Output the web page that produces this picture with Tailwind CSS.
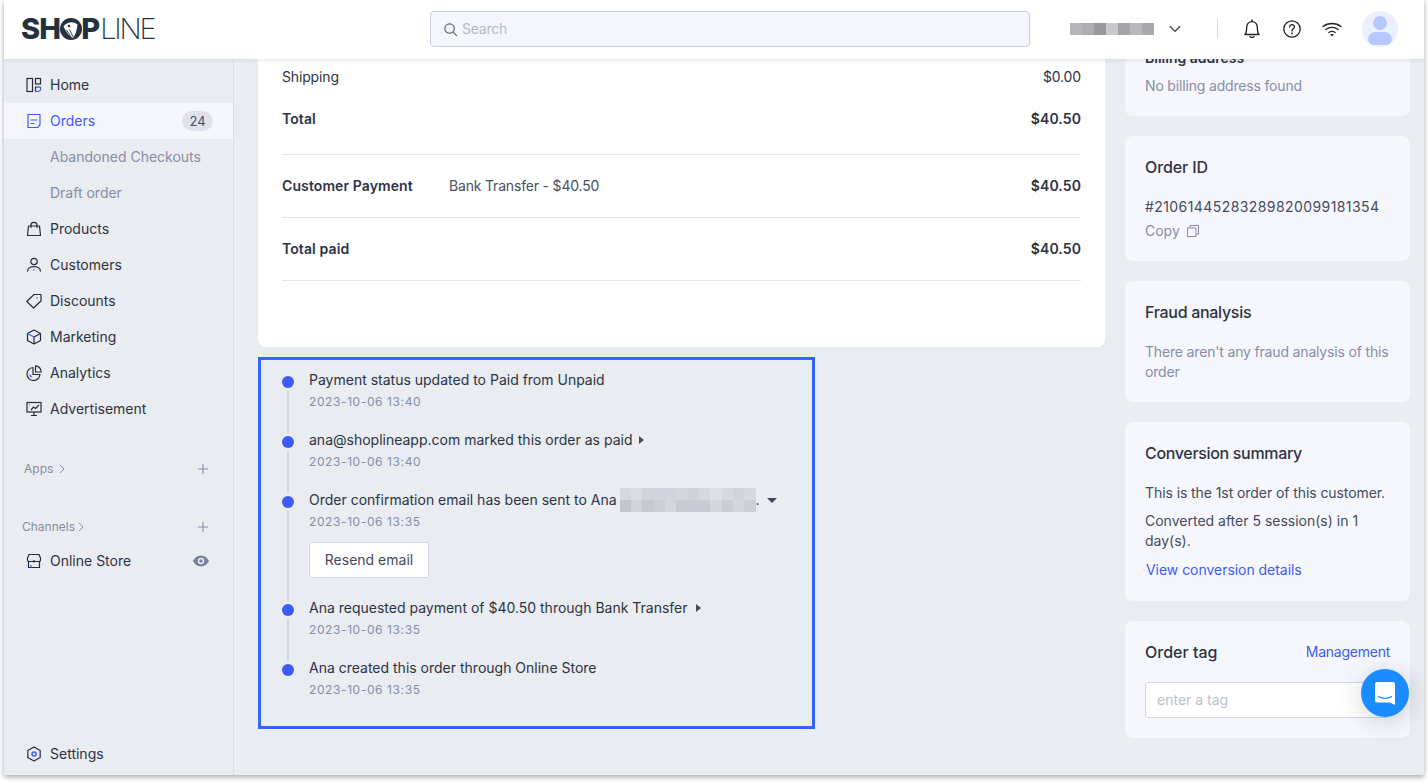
<!DOCTYPE html>
<html lang="en">

<head>
    <meta charset="UTF-8">
    <meta name="viewport" content="width=device-width, initial-scale=1.0">
    <title>Order detail | SHOPLINE</title>
    <script src="https://cdn.jsdelivr.net/npm/@tailwindcss/browser@4"></script>
</head>

<body class="bg-white font-['Inter',sans-serif] text-[14px] leading-[22px] text-[#2e3344] h-[783px] overflow-hidden">
    <div class="relative ml-[4px] w-[1420px] h-[775px] bg-[#e9ecf1] shadow-[0_2px_5px_rgba(0,0,0,0.35)] flex flex-col overflow-hidden">

        <!-- Header -->
        <header class="relative z-10 h-[59px] shrink-0 bg-white shadow-[0_1px_4px_rgba(40,50,80,0.12)] flex items-center pl-[18px] pb-px">
            <div class="w-[408px] flex items-center h-[30px] font-['Inter',sans-serif] text-[#233240] text-[29px] leading-[30px]">
                <span class="font-extrabold tracking-[-0.8px] -ml-px">SH</span>
                <svg class="w-[22px] h-[22px] mx-[-0.5px]" viewBox="0 0 22 22">
                    <circle cx="11" cy="11" r="11" fill="#233240" />
                    <path d="M3.5 8.5 C6 4.5 13 2.5 17.5 6.5 C17 12 15.5 16.5 13 20 C10.5 19.5 6 14 3.5 8.5 Z" fill="#fff" />
                    <circle cx="9" cy="8" r="1.3" fill="#233240" />
                    <path d="M6.5 12 L11 19 M9.5 11.5 L13 19" stroke="#233240" stroke-width="0.9" />
                </svg>
                <span class="font-extrabold">P</span>
                <span class="font-extralight tracking-[-2.2px]">LINE</span>
            </div>
            <div class="w-[600px] h-[36px] rounded-[4px] border border-[#c8cede] bg-[#f4f6fb] flex items-center pl-[12px] gap-[4px] text-[#b4b9ca]">
                <svg class="w-[15px] h-[15px] text-[#5d6375]" viewBox="0 0 16 16" fill="none" stroke="currentColor" stroke-width="1.3">
                    <circle cx="7" cy="7" r="5" />
                    <path d="M10.8 10.8 L14.5 14.5" stroke-linecap="round" />
                </svg>
                <span class="tracking-[-0.25px]">Search</span>
            </div>
            <div class="ml-[40px] w-[85px] h-[12px] flex">
                <div class="w-[12px] bg-[#b5b5ba]"></div>
                <div class="w-[12px] bg-[#adadb2]"></div>
                <div class="w-[12px] bg-[#98989d]"></div>
                <div class="w-[12px] bg-[#c9c9cc]"></div>
                <div class="w-[12px] bg-[#a3a3a8]"></div>
                <div class="w-[12px] bg-[#b9b9bd]"></div>
                <div class="w-[12px] bg-[#aaaaae]"></div>
            </div>
            <svg class="ml-[14px] w-[12px] h-[8px] text-[#3a3f4e]" viewBox="0 0 12 8" fill="none" stroke="currentColor" stroke-width="1.3">
                <path d="M1 1.2 L6 6.4 L11 1.2" />
            </svg>
            <div class="ml-[36px] w-px h-[20px] bg-[#d5d8e0]"></div>
            <svg class="ml-[25px] w-[18px] h-[20px] text-[#1f2430]" viewBox="0 0 18 20" fill="none" stroke="currentColor" stroke-width="1.4">
                <path d="M2 15.5 C3.5 14 3.6 12.5 3.6 9 C3.6 5 6 2.6 9 2.6 C12 2.6 14.4 5 14.4 9 C14.4 12.5 14.5 14 16 15.5 Z" stroke-linejoin="round" />
                <path d="M9 1 V2.6 M7 17.5 C7.5 18.8 10.5 18.8 11 17.5" stroke-linecap="round" />
            </svg>
            <svg class="ml-[22px] w-[18px] h-[18px] text-[#1f2430]" viewBox="0 0 18 18" fill="none" stroke="currentColor" stroke-width="1.3">
                <circle cx="9" cy="9" r="8.2" />
                <path d="M6.6 7 C6.6 3.9 11.4 3.9 11.4 7 C11.4 8.9 9 8.8 9 11" stroke-linecap="round" />
                <circle cx="9" cy="13.4" r="0.9" fill="currentColor" stroke="none" />
            </svg>
            <svg class="ml-[21px] w-[20px] h-[15px] text-[#1f2430]" viewBox="0 0 20 15" fill="none" stroke="currentColor" stroke-width="1.3">
                <path d="M1 4.5 C6 0.5 14 0.5 19 4.5 M3.8 7.6 C7.5 4.8 12.5 4.8 16.2 7.6 M6.8 10.5 C8.8 9.2 11.2 9.2 13.2 10.5" stroke-linecap="round" />
                <path d="M8 12 H12 L10 14.5 Z" fill="currentColor" stroke="none" />
            </svg>
            <div class="ml-[20px] w-[36px] h-[36px] rounded-full bg-[#ebefff] overflow-hidden flex flex-col items-center">
                <div class="mt-[5px] w-[14px] h-[14px] rounded-full bg-[#b6c8ff]"></div>
                <div class="mt-[2px] w-[24px] h-[13px] rounded-t-[10px] rounded-b-[8px] bg-[#b6c8ff]"></div>
            </div>
        </header>

        <div class="flex flex-1 min-h-0">

            <!-- Sidebar -->
            <aside class="w-[230px] shrink-0 border-r border-[#d9dde6] flex flex-col pt-[8px] pb-[3px]">
                <a class="h-[36px] flex items-center pl-[22px]">
                    <svg class="w-[16px] h-[16px] mr-[8px] text-[#262b38]" viewBox="0 0 16 16" fill="none" stroke="currentColor" stroke-width="1.2">
                        <rect x="1" y="1.5" width="5.5" height="13" />
                        <rect x="9.5" y="1.5" width="5" height="5.5" />
                        <path d="M14.5 10 V13 L12.5 14.5 H9.5" stroke="#3d5afe" />
                        <path d="M9.5 14.5 V10 H14.5" />
                    </svg>
                    <span>Home</span>
                </a>
                <a class="h-[36px] flex items-center pl-[22px] pr-[20px] bg-[#f5f6fb] text-[#3d5afe]">
                    <svg class="w-[16px] h-[16px] mr-[8px]" viewBox="0 0 16 16" fill="none" stroke="currentColor" stroke-width="1.2">
                        <path d="M2 1.5 H14 V12 L11.5 14.5 H2 Z" stroke-linejoin="round" />
                        <path d="M5 7 H11 M5 10.5 H8" stroke-linecap="round" />
                    </svg>
                    <span>Orders</span>
                    <span class="ml-auto w-[31px] h-[20px] rounded-full bg-[#dfe2ed] text-[#4a4f60] text-[13px] leading-[20px] text-center">24</span>
                </a>
                <a class="h-[36px] flex items-center pl-[46px] text-[#878da6]">Abandoned Checkouts</a>
                <a class="h-[36px] flex items-center pl-[46px] text-[#878da6]">Draft order</a>
                <a class="h-[36px] flex items-center pl-[22px]">
                    <svg class="w-[16px] h-[16px] mr-[8px] text-[#262b38]" viewBox="0 0 16 16" fill="none" stroke="currentColor" stroke-width="1.2">
                        <path d="M2.5 5 H13.5 L14.5 14.5 H1.5 Z" stroke-linejoin="round" />
                        <path d="M5 7 V4 C5 0.6 11 0.6 11 4 V7" />
                    </svg>
                    <span>Products</span>
                </a>
                <a class="h-[36px] flex items-center pl-[22px]">
                    <svg class="w-[16px] h-[16px] mr-[8px] text-[#262b38]" viewBox="0 0 16 16" fill="none" stroke="currentColor" stroke-width="1.2">
                        <circle cx="8" cy="4.5" r="3.2" />
                        <path d="M1.5 14.5 C1.5 8 14.5 8 14.5 14.5" />
                        <path d="M8 12 V13.5" stroke="#3d5afe" />
                    </svg>
                    <span>Customers</span>
                </a>
                <a class="h-[36px] flex items-center pl-[22px]">
                    <svg class="w-[16px] h-[16px] mr-[8px] text-[#262b38]" viewBox="0 0 16 16" fill="none" stroke="currentColor" stroke-width="1.2">
                        <path d="M0.8 8.5 L8 1.5 H15 V8 L7.5 15 Z" stroke-linejoin="round" />
                        <circle cx="11" cy="5" r="0.8" fill="#3d5afe" stroke="none" />
                    </svg>
                    <span>Discounts</span>
                </a>
                <a class="h-[36px] flex items-center pl-[22px]">
                    <svg class="w-[16px] h-[16px] mr-[8px] text-[#262b38]" viewBox="0 0 16 16" fill="none" stroke="currentColor" stroke-width="1.2">
                        <path d="M8 1 L14.5 4.5 V11.5 L8 15 L1.5 11.5 V4.5 Z" stroke-linejoin="round" />
                        <path d="M8 8 L14.5 4.5 M8 8 V15" />
                        <path d="M8 8 L1.5 4.5" stroke="#3d5afe" />
                    </svg>
                    <span>Marketing</span>
                </a>
                <a class="h-[36px] flex items-center pl-[22px]">
                    <svg class="w-[16px] h-[16px] mr-[8px] text-[#262b38]" viewBox="0 0 16 16" fill="none" stroke="currentColor" stroke-width="1.2">
                        <path d="M7 2.5 A6.5 6.5 0 1 0 14 9.5 H7 Z" stroke-linejoin="round" />
                        <path d="M9.5 0.8 A6 6 0 0 1 15.2 7 H9.5 Z" stroke-linejoin="round" />
                        <path d="M3.6 9.5 A3.5 3.5 0 0 0 6 12" stroke="#3d5afe" />
                    </svg>
                    <span>Analytics</span>
                </a>
                <a class="h-[36px] flex items-center pl-[22px]">
                    <svg class="w-[16px] h-[16px] mr-[8px] text-[#262b38]" viewBox="0 0 16 16" fill="none" stroke="currentColor" stroke-width="1.2">
                        <rect x="1" y="1.5" width="14" height="9.5" />
                        <path d="M8 11 V14.5 M5 14.5 H11 M5 9 L7.5 6 L9.5 7.5 L13 4" />
                        <path d="M3 4 H4" stroke="#3d5afe" />
                    </svg>
                    <span>Advertisement</span>
                </a>
                <div class="mt-[33px] h-[18px] flex items-center pl-[20px] pr-[25px] text-[12px] text-[#878da6]">
                    <span>Apps</span>
                    <svg class="ml-[6px] w-[6px] h-[10px]" viewBox="0 0 6 10" fill="none" stroke="currentColor" stroke-width="1">
                        <path d="M1 0.8 L5 5 L1 9.2" />
                    </svg>
                    <svg class="ml-auto w-[10px] h-[10px]" viewBox="0 0 10 10" stroke="currentColor" stroke-width="1.1">
                        <path d="M5 0 V10 M0 5 H10" />
                    </svg>
                </div>
                <div class="mt-[40px] h-[18px] flex items-center pl-[18px] pr-[25px] text-[12px] text-[#878da6]">
                    <span>Channels</span>
                    <svg class="ml-[3px] w-[6px] h-[10px]" viewBox="0 0 6 10" fill="none" stroke="currentColor" stroke-width="1">
                        <path d="M1 0.8 L5 5 L1 9.2" />
                    </svg>
                    <svg class="ml-auto w-[10px] h-[10px]" viewBox="0 0 10 10" stroke="currentColor" stroke-width="1.1">
                        <path d="M5 0 V10 M0 5 H10" />
                    </svg>
                </div>
                <a class="mt-[7px] h-[36px] flex items-center pl-[22px] pr-[24px]">
                    <svg class="w-[16px] h-[16px] mr-[8px] text-[#262b38]" viewBox="0 0 16 16" fill="none" stroke="currentColor" stroke-width="1.2">
                        <path d="M3 1.5 H13 L14.5 5 V7 C14.5 8 13.5 8.5 13.5 8.5 V14.5 H2.5 V8.5 C2.5 8.5 1.5 8 1.5 7 V5 Z" stroke-linejoin="round" />
                        <path d="M2 8.5 H14 M8 7 V9.5" />
                        <path d="M5 12 V14.5" stroke="#3d5afe" />
                    </svg>
                    <span>Online Store</span>
                    <svg class="ml-auto w-[16px] h-[12px] text-[#7a819b]" viewBox="0 0 16 12">
                        <path fill-rule="evenodd" d="M8 0.5 C12 0.5 14.8 3.6 16 6 C14.8 8.4 12 11.5 8 11.5 C4 11.5 1.2 8.4 0 6 C1.2 3.6 4 0.5 8 0.5 Z M8 2.8 A3.2 3.2 0 1 0 8 9.2 A3.2 3.2 0 1 0 8 2.8 Z" fill="currentColor" />
                        <circle cx="8" cy="6" r="1.7" fill="currentColor" />
                    </svg>
                </a>
                <a class="mt-auto h-[36px] flex items-center pl-[22px]">
                    <svg class="w-[16px] h-[16px] mr-[8px] text-[#262b38]" viewBox="0 0 16 16" fill="none" stroke="currentColor" stroke-width="1.2">
                        <path d="M8 1 L14.2 4.5 V11.5 L8 15 L1.8 11.5 V4.5 Z" stroke-linejoin="round" />
                        <circle cx="8" cy="8" r="2" stroke="#3d5afe" stroke-width="1.5" />
                    </svg>
                    <span>Settings</span>
                </a>
            </aside>

            <!-- Main -->
            <main class="flex-1 min-w-0 overflow-hidden flex items-start pl-[24px]">
                <div class="w-[847px] shrink-0">
                    <section class="bg-white rounded-b-[8px] px-[24px] pt-[7px] h-[288px]">
                        <div class="flex justify-between tracking-[-0.15px]">
                            <span>Shipping</span>
                            <span>$0.00</span>
                        </div>
                        <div class="mt-[20px] flex justify-between font-semibold tracking-[0.1px]">
                            <span>Total</span>
                            <span>$40.50</span>
                        </div>
                        <div class="mt-[24px] h-px bg-[#e3e5ec]"></div>
                        <div class="mt-[20px] flex items-center font-semibold tracking-[0.1px]">
                            <span class="w-[167px]">Customer Payment</span>
                            <span class="font-normal tracking-[-0.18px] text-[#4a4f60]">Bank Transfer - $40.50</span>
                            <span class="ml-auto">$40.50</span>
                        </div>
                        <div class="mt-[20px] h-px bg-[#e3e5ec]"></div>
                        <div class="mt-[20px] flex justify-between font-semibold tracking-[0.1px]">
                            <span>Total paid</span>
                            <span>$40.50</span>
                        </div>
                        <div class="mt-[20px] h-px bg-[#e3e5ec]"></div>
                    </section>

                    <!-- Timeline -->
                    <section class="mt-[10px] w-[557px] h-[372px] border-[3px] border-[#3366ff] pt-[9px] pl-[21px]">
                        <div class="flex gap-[15px]">
                            <div class="w-[12px] flex flex-col items-center">
                                <div class="mt-[7px] w-[12px] h-[12px] rounded-full bg-[#3d5afe]"></div>
                                <div class="mt-[3px] -mb-[4px] flex-1 w-[2px] bg-[#d3d7e8]"></div>
                            </div>
                            <div class="pb-[16px]">
                                <p>Payment status updated to Paid from Unpaid</p>
                                <p class="text-[12px] text-[#878da6] tracking-[0.6px]">2023-10-06 13:40</p>
                            </div>
                        </div>
                        <div class="flex gap-[15px]">
                            <div class="w-[12px] flex flex-col items-center">
                                <div class="mt-[7px] w-[12px] h-[12px] rounded-full bg-[#3d5afe]"></div>
                                <div class="mt-[3px] -mb-[4px] flex-1 w-[2px] bg-[#d3d7e8]"></div>
                            </div>
                            <div class="pb-[16px]">
                                <p class="flex items-center">ana@shoplineapp.com marked this order as paid
                                    <span class="ml-[7px] w-0 h-0 border-y-[4px] border-y-transparent border-l-[5px] border-l-[#454a5c]"></span>
                                </p>
                                <p class="text-[12px] text-[#878da6] tracking-[0.6px]">2023-10-06 13:40</p>
                            </div>
                        </div>
                        <div class="flex gap-[15px]">
                            <div class="w-[12px] flex flex-col items-center">
                                <div class="mt-[7px] w-[12px] h-[12px] rounded-full bg-[#3d5afe]"></div>
                                <div class="mt-[3px] -mb-[4px] flex-1 w-[2px] bg-[#d3d7e8]"></div>
                            </div>
                            <div class="pb-[19px]">
                                <p class="flex items-center">Order confirmation email has been sent to Ana
                                    <span class="ml-[3px] -my-px w-[136px] h-[24px] grid grid-cols-[repeat(12,1fr)] opacity-90">
                                        <i class="bg-[#d2d5dd]"></i><i class="bg-[#d8dbe2]"></i><i class="bg-[#cfd2da]"></i><i class="bg-[#cfd2da]"></i><i class="bg-[#cfd3db]"></i><i class="bg-[#d2d5dd]"></i><i class="bg-[#cdd0d8]"></i><i class="bg-[#d3d6de]"></i><i class="bg-[#dcdfe5]"></i><i class="bg-[#d5d8e0]"></i><i class="bg-[#cfd2da]"></i><i class="bg-[#d4d7df]"></i>
                                        <i class="bg-[#bfc2ca]"></i><i class="bg-[#cfd2d9]"></i><i class="bg-[#c3c6ce]"></i><i class="bg-[#c8cbd2]"></i><i class="bg-[#d0d3da]"></i><i class="bg-[#c5c8d0]"></i><i class="bg-[#c5c8d0]"></i><i class="bg-[#c4c7cf]"></i><i class="bg-[#d2d5dc]"></i><i class="bg-[#c7cad2]"></i><i class="bg-[#d2d5dc]"></i><i class="bg-[#c9ccd4]"></i>
                                    </span>
                                    <span>.</span>
                                    <span class="ml-[7px] w-0 h-0 border-x-[5px] border-x-transparent border-t-[5px] border-t-[#454a5c]"></span>
                                </p>
                                <p class="text-[12px] text-[#878da6] tracking-[0.6px]">2023-10-06 13:35</p>
                                <button class="mt-[9px] block w-[120px] h-[36px] rounded-[3px] border border-[#d5d8e6] bg-white text-[#454a5c]">Resend email</button>
                            </div>
                        </div>
                        <div class="flex gap-[15px]">
                            <div class="w-[12px] flex flex-col items-center">
                                <div class="mt-[7px] w-[12px] h-[12px] rounded-full bg-[#3d5afe]"></div>
                                <div class="mt-[3px] -mb-[4px] flex-1 w-[2px] bg-[#d3d7e8]"></div>
                            </div>
                            <div class="pb-[16px]">
                                <p class="flex items-center">Ana requested payment of $40.50 through Bank Transfer
                                    <span class="ml-[8px] w-0 h-0 border-y-[4px] border-y-transparent border-l-[5px] border-l-[#454a5c]"></span>
                                </p>
                                <p class="text-[12px] text-[#878da6] tracking-[0.6px]">2023-10-06 13:35</p>
                            </div>
                        </div>
                        <div class="flex gap-[15px]">
                            <div class="w-[12px] flex flex-col items-center">
                                <div class="mt-[7px] w-[12px] h-[12px] rounded-full bg-[#3d5afe]"></div>
                            </div>
                            <div>
                                <p>Ana created this order through Online Store</p>
                                <p class="text-[12px] text-[#878da6] tracking-[0.6px]">2023-10-06 13:35</p>
                            </div>
                        </div>
                    </section>
                </div>

                <!-- Right column -->
                <div class="ml-[20px] w-[285px] shrink-0 flex flex-col gap-[20px]">
                    <section class="-mt-[20px] h-[77px] rounded-[8px] bg-[#f6f7fc] px-[20px] pt-[8px]">
                        <p class="font-semibold">Billing address</p>
                        <p class="mt-[6px] tracking-[-0.17px] text-[#878da6]">No billing address found</p>
                    </section>
                    <section class="h-[125px] rounded-[8px] bg-[#f6f7fc] px-[20px] pt-[19px]">
                        <h3 class="text-[16px] leading-[24px] font-medium tracking-[-0.1px]">Order ID</h3>
                        <p class="mt-[17px] tracking-[0.42px] text-[#454a5c]">#21061445283289820099181354</p>
                        <p class="mt-[2px] flex items-center text-[#878da6]">Copy
                            <svg class="ml-[7px] w-[12px] h-[12px]" viewBox="0 0 12 12" fill="none" stroke="currentColor" stroke-width="1">
                                <rect x="0.5" y="3" width="8.5" height="8.5" />
                                <path d="M3 3 V0.5 H11.5 V9 H9" />
                            </svg>
                        </p>
                    </section>
                    <section class="h-[121px] rounded-[8px] bg-[#f6f7fc] px-[20px] pt-[19px]">
                        <h3 class="text-[16px] leading-[24px] font-medium tracking-[-0.3px]">Fraud analysis</h3>
                        <p class="mt-[18px] leading-[20px] tracking-[-0.17px] text-[#878da6]">There aren't any fraud analysis of this order</p>
                    </section>
                    <section class="h-[179px] rounded-[8px] bg-[#f6f7fc] px-[20px] pt-[19px]">
                        <h3 class="text-[16px] leading-[24px] font-medium tracking-[-0.33px]">Conversion summary</h3>
                        <p class="mt-[18px] leading-[20px] tracking-[-0.08px] text-[#454a5c]">This is the 1st order of this customer.</p>
                        <p class="mt-[8px] leading-[20px] text-[#454a5c]">Converted after 5 session(s) in 1 day(s).</p>
                        <a class="mt-[9px] block leading-[20px] text-[#3d5afe] pl-px tracking-[-0.04px]">View conversion details</a>
                    </section>
                    <section class="h-[117px] rounded-[8px] bg-[#f6f7fc] px-[20px] pt-[19px]">
                        <div class="flex items-center justify-between">
                            <h3 class="text-[16px] leading-[24px] font-medium">Order tag</h3>
                            <a class="text-[#3d5afe] tracking-[-0.25px]">Management</a>
                        </div>
                        <input class="mt-[18px] w-full h-[36px] rounded-[3px] border border-[#d3d7e6] bg-white px-[11px] pb-[2px] placeholder:text-[#bcc0d0] outline-none" placeholder="enter a tag">
                    </section>
                </div>
            </main>
        </div>

        <!-- Chat bubble -->
        <button class="absolute left-[1357px] top-[669px] z-20 w-[48px] h-[48px] rounded-full bg-[#1a8cff] shadow-[0_4px_24px_rgba(40,60,90,0.22)] flex items-center justify-center">
            <svg class="w-[22px] h-[25px]" viewBox="0 0 22 25">
                <path d="M3 1 H19 A2 2 0 0 1 21 3 V24 L16 21.5 H3 A2 2 0 0 1 1 19.5 V3 A2 2 0 0 1 3 1 Z" fill="#fff" />
                <path d="M4.5 15.5 C8 18 14 18 17.5 15.5" fill="none" stroke="#1a8cff" stroke-width="1.2" stroke-linecap="round" />
            </svg>
        </button>
    </div>
</body>

</html>
